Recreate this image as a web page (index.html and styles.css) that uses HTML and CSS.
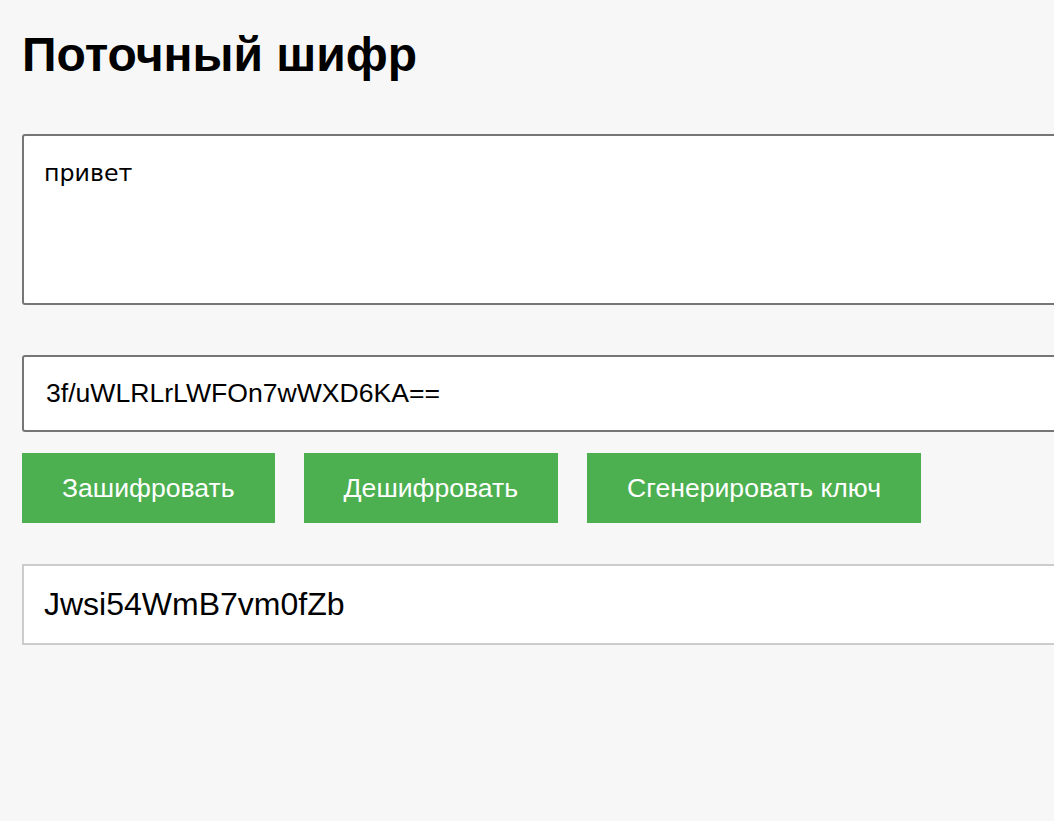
FILE: index.html
```html
<!DOCTYPE html>
<html lang="ru">
<head>
<meta charset="utf-8">
<title>Поточный шифр</title>
<link rel="stylesheet" href="styles.css">
</head>
<body>
<div class="app">
  <h1 class="title">Поточный шифр</h1>
  <textarea class="plain">привет</textarea>
  <input class="cipher" type="text" value="3f/uWLRLrLWFOn7wWXD6KA==">
  <div class="buttons">
    <button class="btn">Зашифровать</button>
    <button class="btn">Дешифровать</button>
    <button class="btn">Сгенерировать ключ</button>
  </div>
  <div class="key">Jwsi54WmB7vm0fZb</div>
</div>
</body>
</html>
```

FILE: styles.css
```css
html, body {
  overflow: hidden;
}
body {
  margin: 0;
  padding: 0 0 0 22px;
  background: #f7f7f7;
  font-family: "Liberation Sans", Arial, sans-serif;
}
.app {
  width: 1100px;
}
.title {
  font-size: 48px;
  line-height: 55px;
  font-weight: bold;
  margin: 27px 0 52px 0;
  color: #000;
}
.plain {
  display: block;
  box-sizing: border-box;
  width: 100%;
  height: 171px;
  margin: 0 0 50px 0;
  padding: 23px 21px 20px 20px;
  border: 2px solid #767676;
  border-radius: 3px;
  background: #fff;
  font-family: "DejaVu Sans", Verdana, sans-serif;
  font-size: 23.7px;
  color: #000;
  resize: none;
}
.cipher {
  display: block;
  box-sizing: border-box;
  width: 100%;
  height: 77px;
  margin: 0 0 21px 0;
  padding: 0 22px;
  border: 2px solid #767676;
  border-radius: 3px;
  background: #fff;
  font-family: "Liberation Sans", Arial, sans-serif;
  font-size: 26.6px;
  color: #000;
}
.buttons {
  display: flex;
  gap: 29px;
  margin-bottom: 41px;
}
.btn {
  height: 70px;
  padding: 0 40px;
  border: none;
  background: #4caf50;
  color: #fff;
  font-family: "Liberation Sans", Arial, sans-serif;
  font-size: 26.6px;
}
.key {
  box-sizing: border-box;
  height: 81px;
  display: flex;
  align-items: center;
  padding: 0 20px;
  border: 2px solid #ccc;
  background: #fff;
  font-size: 32px;
  color: #000;
}
```
